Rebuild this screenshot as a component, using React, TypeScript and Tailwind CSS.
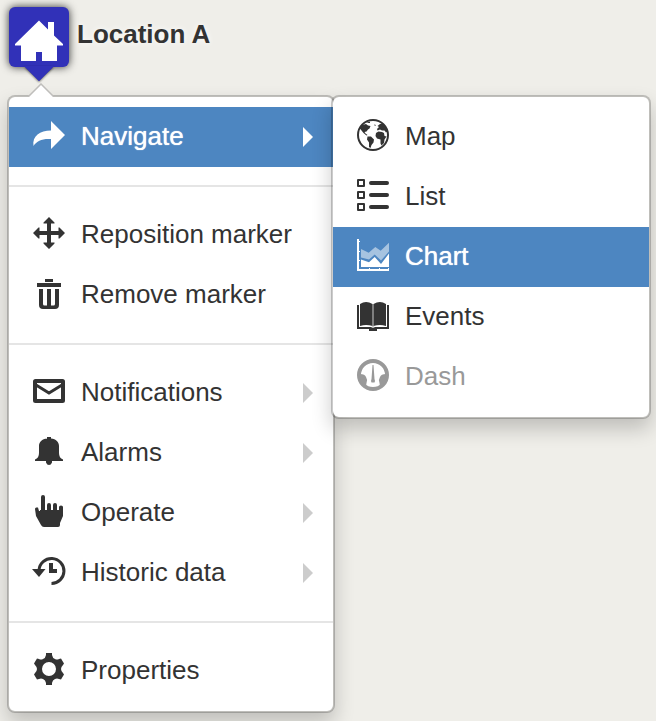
import type { ReactNode } from "react";

function Icon({ children }: { children: ReactNode }) {
  return (
    <svg viewBox="0 0 32 32" className="size-8 shrink-0 overflow-visible" fill="currentColor" aria-hidden="true">
      {children}
    </svg>
  );
}

const icons = {
  share: (
    <Icon>
      <path d="M18 2 32 16 18 30V20C9 19.500 4 21.500 0.500 27C-1 17 7 11.500 18 11.500Z" />
    </Icon>
  ),
  move: (
    <Icon>
      <path d="M16 0 21.500 5.500V6.500H18V14H25.500V10.500H26.500L32 16 26.500 21.500H25.500V18H18V25.500H21.500V26.500L16 32 10.500 26.500V25.500H14V18H6.500V21.500H5.500L0 16 5.500 10.500H6.500V14H14V6.500H10.500V5.500Z" />
    </Icon>
  ),
  trash: (
    <Icon>
      <path d="M12 2H20V5H12ZM4 6H28V10H4Z" />
      <path fillRule="evenodd" d="M6 12H26V28Q26 32 22 32H10Q6 32 6 28ZM10 12V27Q10 28.500 11.500 28.500H14V12ZM18 12V28.500H20.500Q22 28.500 22 27V12Z" />
    </Icon>
  ),
  mail: (
    <Icon>
      <rect x="2" y="6" width="28" height="20" rx="0.500" fill="none" stroke="currentColor" strokeWidth="4" />
      <path d="M3 10 16 18 29 10" fill="none" stroke="currentColor" strokeWidth="3" />
    </Icon>
  ),
  bell: (
    <Icon>
      <path d="M14 4V2H18V3.500C23 4 26 7 26 11V18Q26 23 30 24.500V26H2V24.500Q6 23 6 18V11C6 7 9 4 14 3.500ZM13 26H19V27.500Q18 30 16 30T13 27.500Z" />
    </Icon>
  ),
  hand: (
    <Icon>
      <path d="M8 16V2Q8 0 10 0T12 2V16H14V10Q14 8 16 8T18 10V16H20V10Q20 8 22 8T24 10V16H26V12Q26 10.500 28 10.500T30 12V21L27 28V30Q27 32 25 32H11Q9 32 8 30L3 21 2 14Q2 12 4 12.500H5L6 16Z" />
      <path d="M7 15H29V22H7Z" />
    </Icon>
  ),
  history: (
    <Icon>
      <path d="M6 15A12.500 12.500 0 1 1 18.500 28.500" fill="none" stroke="currentColor" strokeWidth="3" />
      <path d="M-1 14H12.500L6 22ZM16 8H20V14H24V18H16Z" />
    </Icon>
  ),
  gear: (
    <Icon>
      <path
        fillRule="evenodd"
        d="M13 0H19V2Q19.500 5 22 6Q24 7 26 6L28 5.500 31 10.500 30 12Q28 14 28 16T30 20L31 21.500 28 26.500 26 26Q24 25 22 26Q19.500 27 19 30V32H13V30Q12.500 27 10 26Q8 25 6 26L4 26.500 1 21.500 2 20Q4 18 4 16T2 12L1 10.500 4 5.500 6 6Q8 7 10 6Q12.500 5 13 2ZM16 9A7 7 0 1 0 16 23A7 7 0 1 0 16 9Z"
      />
    </Icon>
  ),
  globe: (
    <Icon>
      <circle cx="16" cy="16" r="15" fill="none" stroke="currentColor" strokeWidth="2" />
      <path d="M2.500 9 5 6 9 5 11 6.500 13.500 7 12.500 9.500 11 10.500 9.500 12.500 7.500 13 8.500 14.500 10.500 16 9.500 16.500 6.500 14 4.500 11.500ZM10.500 17.500 14 17.500 17 20.500 16.500 23.500 14.500 26 13.500 29 12 28 12 23.500 10 20.500ZM9 4 13 2.500 13 4ZM20 10 22 8 20.500 7 23 5 26 4.500 28.500 8 30.500 12.500 29 13.500 27.500 11.500 25 11.500 23 10.500 20.500 11.500ZM19 14 21.500 12.500 25 13 27 14 27.500 17 29.500 17.500 27.500 20.500 27 24 24.500 26.500 23.500 24.500 23.500 20.500 20 19.500 18.500 17ZM17 5.500 19 6 18 7Z" />
    </Icon>
  ),
  list: (
    <Icon>
      <path d="M1 1H7V7H1ZM1 13H7V19H1ZM1 25H7V31H1Z" fill="none" stroke="currentColor" strokeWidth="2" strokeLinejoin="round" />
      <path d="M14 4H30M14 16H30M14 28H30" stroke="currentColor" strokeWidth="4" strokeLinecap="round" />
    </Icon>
  ),
  chart: (
    <Icon>
      <path d="M0 0H2V2H3V3H2V12H3V13H2V21H3V22H2V30H12V29H13V30H22V29H23V30H31V29H32V32H0Z" />
      <path d="M4 20.500 12 23.300 17.700 18 24 25 32 14.500V28H4Z" />
      <path d="M4 10 11.700 13.700 18.300 8 23.700 11.700 32 3.700V12.500L24 21.500 17.700 15.500 12 20.500 4 18.500Z" opacity="0.500" />
    </Icon>
  ),
  book: (
    <Icon>
      <path d="M0 6H2V28H14Q16 29.500 18 28H30V6H32V30H20V32H12V30H0Z" />
      <path d="M3 5Q9 1 15.500 5V27Q9 25 3 27ZM16.500 5Q23 1 29 5V27Q23 25 16.500 27Z" />
      <path d="M16 5V28" stroke="currentColor" strokeWidth="1" opacity="0.500" />
    </Icon>
  ),
  gauge: (
    <Icon>
      <circle cx="16" cy="16" r="14" fill="none" stroke="currentColor" strokeWidth="4" />
      <path d="M3 15Q8 15 9 18Q11 21 9.500 24L9 27 4 24ZM29 15Q24 15 23 18Q21 21 22.500 24L23 27 28 24Z" />
      <path d="M15.500 6H16.500L17.500 20Q18.500 22 17.500 23.500H14.500Q13.500 22 14.500 20Z" />
    </Icon>
  ),
};

type Entry = {
  label: string;
  icon: ReactNode;
  active?: boolean;
  disabled?: boolean;
  expands?: boolean;
};

const groups: Entry[][] = [
  [{ label: "Navigate", icon: icons.share, active: true, expands: true }],
  [
    { label: "Reposition marker", icon: icons.move },
    { label: "Remove marker", icon: icons.trash },
  ],
  [
    { label: "Notifications", icon: icons.mail, expands: true },
    { label: "Alarms", icon: icons.bell, expands: true },
    { label: "Operate", icon: icons.hand, expands: true },
    { label: "Historic data", icon: icons.history, expands: true },
  ],
  [{ label: "Properties", icon: icons.gear }],
];

const views: Entry[] = [
  { label: "Map", icon: icons.globe },
  { label: "List", icon: icons.list },
  { label: "Chart", icon: icons.chart, active: true },
  { label: "Events", icon: icons.book },
  { label: "Dash", icon: icons.gauge, disabled: true },
];

function MenuItem({ label, icon, active, disabled, expands }: Entry) {
  const tone = active
    ? "bg-[#4d86c1] text-white [text-shadow:0_0_1px_white]"
    : disabled
      ? "text-[#999999]"
      : "text-[#333333]";
  return (
    <button
      type="button"
      role="menuitem"
      disabled={disabled}
      aria-haspopup={expands ? "menu" : undefined}
      className={`flex h-15 w-full items-start gap-4 pt-3 pr-5 pl-6 text-left ${tone}`}
    >
      {icon}
      <span className="grow leading-[34px] whitespace-nowrap">{label}</span>
      {expands && (
        <svg viewBox="0 0 10 20" className={`mt-2 h-5 w-[10px] ${active ? "text-white" : "text-[#cccccc]"}`} fill="currentColor" aria-hidden="true">
          <path d="M0 0 10 10 0 20Z" />
        </svg>
      )}
    </button>
  );
}

const panel =
  "rounded-lg border-2 border-black/20 bg-white bg-clip-padding py-[10px] shadow-[0_10px_20px_rgba(0,0,0,0.2)]";

export default function App() {
  return (
    <main className="min-h-screen bg-[#efeee9] px-[7px] pt-[7px] pb-2 font-['Liberation_Sans',Arial,sans-serif] text-[26px] text-[#333333]">
      <header className="flex h-[88px] items-start gap-2 pl-[2px]">
        <div className="relative">
          <svg viewBox="0 0 30 16" className="absolute top-[59px] left-[15px] h-4 w-[30px] overflow-visible drop-shadow-[0_1px_1px_rgba(0,0,0,0.6)]" aria-hidden="true">
            <path d="M0 0H30L15 15Z" fill="#3131b8" />
          </svg>
          <div className="flex size-15 items-center justify-center rounded-md bg-[#3131b8] shadow-[0_0_8px_rgba(0,0,0,0.8)]">
            <svg viewBox="0 0 60 60" className="size-15" fill="white" aria-hidden="true">
              <path d="M30 13.500 39 22.500V15H45V28.500L54 37V38.500H48V54H33V45H27V54H12V38.500H6V37Z" />
            </svg>
          </div>
          <svg viewBox="0 0 30 16" className="absolute top-[59px] left-[15px] h-4 w-[30px]" aria-hidden="true">
            <path d="M0 0H30L15 15Z" fill="#3131b8" />
          </svg>
        </div>
        <h1 className="leading-[54px] font-bold [text-shadow:0_0_6px_white]">Location A</h1>
      </header>

      <div className="relative w-[328px]">
        <nav role="menu" aria-label="Location A" className={panel}>
          {groups.map((group, index) => (
            <div key={group[0].label} role="group">
              {index > 0 && <hr className="my-[18px] border-t-2 border-[#e5e5e5]" />}
              {group.map((entry) => (
                <MenuItem key={entry.label} {...entry} />
              ))}
            </div>
          ))}
        </nav>
        <svg viewBox="0 0 28 14" className="absolute -top-3 left-5 h-[14px] w-7" aria-hidden="true">
          <path d="M1 14 14 1 27 14Z" fill="white" />
          <path d="M1 14 14 1 27 14" fill="none" stroke="#bfbebb" strokeWidth="1.500" />
        </svg>
        <div role="menu" aria-label="Navigate" className={`absolute top-0 left-[324px] w-80 ${panel}`}>
          {views.map((entry) => (
            <MenuItem key={entry.label} {...entry} />
          ))}
        </div>
      </div>
    </main>
  );
}
